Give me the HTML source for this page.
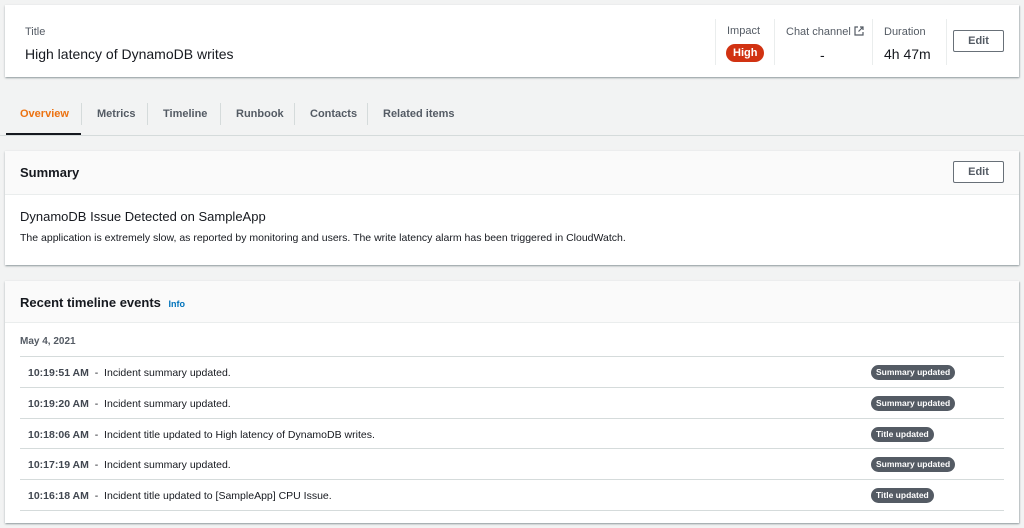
<!DOCTYPE html>
<html><head><style>
*{box-sizing:border-box;margin:0;padding:0}
body{width:1024px;height:528px;background:#f2f3f3;font-family:"Liberation Sans",sans-serif;color:#16191f;position:relative;overflow:hidden}
.a{position:absolute}
.card{position:absolute;background:#fff;box-shadow:0 1px 2px rgba(0,28,36,.3),1px 1px 1px rgba(0,28,36,.15);}
.lbl{font-size:11px;color:#545b64}
.btn{position:absolute;border:1px solid #687078;border-radius:2px;background:#fff;font-size:11px;font-weight:bold;color:#545b64;text-align:center;line-height:20px}
.tab{position:absolute;top:108px;font-size:11px;font-weight:bold;color:#545b64}
.sep{position:absolute;top:103px;width:1px;height:22px;background:#d5dbdb}
.row{position:absolute;left:20px;width:984px;height:31px;border-top:1px solid #d5dbdb;font-size:10.5px}
.row .t{position:absolute;left:8px;top:10px}
.row b{color:#414750}
.badge{position:absolute;top:8px;left:851px;background:#545b64;color:#fff;font-size:8.5px;font-weight:bold;border-radius:8px;padding:2px 5px;line-height:11px}
</style></head><body>
<div class="card" style="left:5px;top:5px;width:1014px;height:72px">
 <div class="a lbl" style="left:20px;top:21px">Title</div>
 <div class="a" style="left:20px;top:41px;font-size:14px">High latency of DynamoDB writes</div>
 <div class="a" style="left:710px;top:14px;width:1px;height:46px;background:#eaeded"></div>
 <div class="a lbl" style="left:722px;top:20px">Impact</div>
 <div class="a" style="left:721px;top:39px;background:#d13212;color:#fff;font-size:11px;font-weight:bold;border-radius:9px;padding:2px 7px;line-height:14px">High</div>
 <div class="a" style="left:769px;top:14px;width:1px;height:46px;background:#eaeded"></div>
 <div class="a lbl" style="left:781px;top:21px">Chat channel <svg width="10" height="10" viewBox="0 0 10 10" style="vertical-align:-1px"><path d="M4 1H1v8h8V6M6 1h3v3M9 1L4.5 5.5" stroke="#545b64" stroke-width="1.2" fill="none"/></svg></div>
 <div class="a" style="left:815px;top:42px;font-size:14px">-</div>
 <div class="a" style="left:867px;top:14px;width:1px;height:46px;background:#eaeded"></div>
 <div class="a lbl" style="left:879px;top:21px">Duration</div>
 <div class="a" style="left:879px;top:41px;font-size:14px">4h 47m</div>
 <div class="a" style="left:941px;top:14px;width:1px;height:46px;background:#eaeded"></div>
 <div class="btn" style="left:948px;top:25px;width:51px;height:22px">Edit</div>
</div>
<div class="tab" style="left:20px;color:#ec7211">Overview</div>
<div class="a" style="left:6px;top:133px;width:75px;height:2px;background:#16191f"></div>
<div class="sep" style="left:81px"></div>
<div class="tab" style="left:97px">Metrics</div>
<div class="sep" style="left:147px"></div>
<div class="tab" style="left:163px">Timeline</div>
<div class="sep" style="left:220px"></div>
<div class="tab" style="left:236px">Runbook</div>
<div class="sep" style="left:294px"></div>
<div class="tab" style="left:310px">Contacts</div>
<div class="sep" style="left:367px"></div>
<div class="tab" style="left:383px">Related items</div>
<div class="a" style="left:0;top:135px;width:1024px;height:1px;background:#d5dbdb"></div>

<div class="card" style="left:5px;top:151px;width:1014px;height:114px">
 <div class="a" style="left:0;top:0;width:1014px;height:44px;background:#fafafa;border-bottom:1px solid #eaeded"></div>
 <div class="a" style="left:15px;top:14px;font-size:13px;font-weight:bold">Summary</div>
 <div class="btn" style="left:948px;top:10px;width:51px;height:22px">Edit</div>
 <div class="a" style="left:15px;top:58px;font-size:13px">DynamoDB Issue Detected on SampleApp</div>
 <div class="a" style="left:15px;top:81px;font-size:10.5px">The application is extremely slow, as reported by monitoring and users. The write latency alarm has been triggered in CloudWatch.</div>
</div>

<div class="card" style="left:5px;top:281px;width:1014px;height:242px">
 <div class="a" style="left:0;top:0;width:1014px;height:42px;background:#fafafa;border-bottom:1px solid #eaeded"></div>
 <div class="a" style="left:15px;top:14px;font-size:13px;font-weight:bold">Recent timeline events <span style="font-size:9px;color:#0073bb;margin-left:4px">Info</span></div>
</div>
<div class="a" style="left:20px;top:336px;font-size:10px;font-weight:bold;color:#545b64">May 4, 2021</div>
<div class="row" style="top:356px"><div class="t"><b>10:19:51 AM</b> &nbsp;- &nbsp;Incident summary updated.</div><span class="badge">Summary updated</span></div>
<div class="row" style="top:387px"><div class="t"><b>10:19:20 AM</b> &nbsp;- &nbsp;Incident summary updated.</div><span class="badge">Summary updated</span></div>
<div class="row" style="top:418px"><div class="t"><b>10:18:06 AM</b> &nbsp;- &nbsp;Incident title updated to High latency of DynamoDB writes.</div><span class="badge">Title updated</span></div>
<div class="row" style="top:448px"><div class="t"><b>10:17:19 AM</b> &nbsp;- &nbsp;Incident summary updated.</div><span class="badge">Summary updated</span></div>
<div class="row" style="top:479px"><div class="t"><b>10:16:18 AM</b> &nbsp;- &nbsp;Incident title updated to [SampleApp] CPU Issue.</div><span class="badge">Title updated</span></div>
<div class="a" style="left:20px;top:510px;width:984px;height:1px;background:#d5dbdb"></div>
</body></html>
